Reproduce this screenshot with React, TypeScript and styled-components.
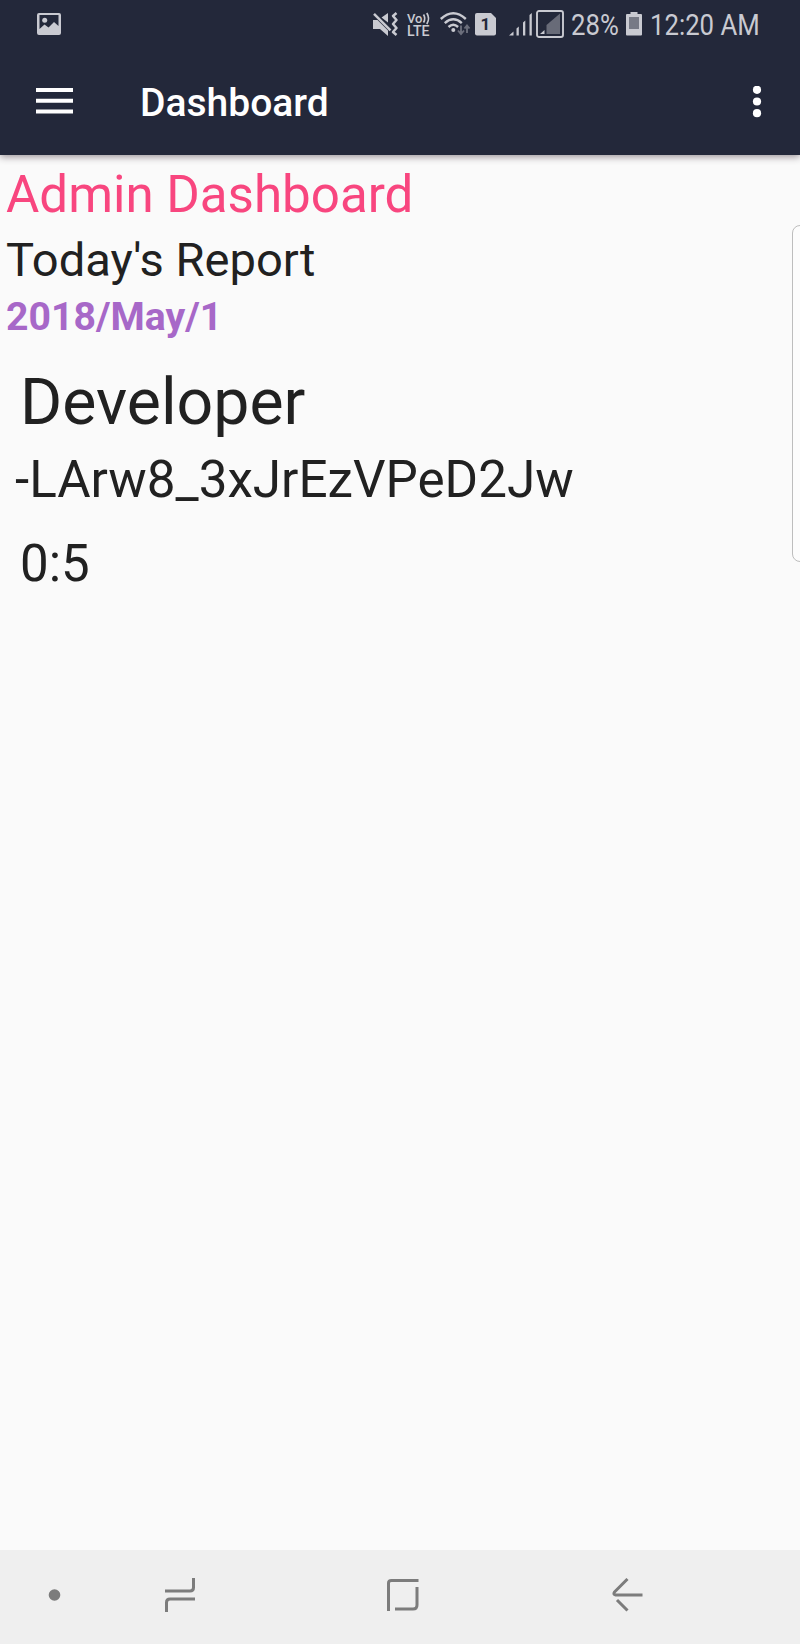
import React from "react";
import styled, { createGlobalStyle } from "styled-components";

const GlobalStyle = createGlobalStyle`
  * { box-sizing: border-box; }
  body { margin: 0; background: #fafafa; font-family: Roboto, "Liberation Sans", sans-serif; }
  svg { display: block; flex: none; }
`;

const Screen = styled.div`
  position: relative;
  display: flex;
  flex-direction: column;
  width: 800px;
  height: 1644px;
  overflow: hidden;
  background: #fafafa;
`;

const Header = styled.header`
  flex: none;
  height: 155px;
  background: #23283a;
  box-shadow: 0 2px 7px rgba(40, 25, 35, 0.45);
`;

const StatusBar = styled.div`
  display: flex;
  align-items: center;
  height: 48px;
  padding: 0 41px 0 37px;
  color: #c9cad1;
`;

const StatusIcons = styled.div`
  display: flex;
  align-items: center;
  margin-left: auto;
`;

const StatusIcon = styled.svg<{ $gap: number }>`
  margin-right: ${(p) => p.$gap}px;
  overflow: visible;
`;

const StatusText = styled.div<{ $width: number; $gap: number }>`
  width: ${(p) => p.$width}px;
  margin-right: ${(p) => p.$gap}px;
  font-size: 29.5px;
  line-height: 48px;
  white-space: nowrap;

  span {
    display: inline-block;
    transform: translateY(1px) scaleX(0.872);
    transform-origin: 0 50%;
  }
`;

const AppBar = styled.div`
  display: flex;
  align-items: center;
  height: 107px;
  padding: 0 38px 0 36px;
`;

const IconButton = styled.button`
  padding: 0;
  border: 0;
  background: none;
  color: #fff;
`;

const Title = styled.h1`
  flex: 1;
  margin: 2px 0 0 67px;
  color: #fff;
  font-size: 39px;
  line-height: 48px;
  font-weight: 500;
`;

const Content = styled.main`
  flex: 1;
  padding: 10px 6px 0;
`;

const Line = styled.div<{
  $size: number;
  $height: number;
  $top?: number;
  $left?: number;
  $color?: string;
  $bold?: boolean;
}>`
  margin-top: ${(p) => p.$top ?? 0}px;
  margin-left: ${(p) => p.$left ?? 0}px;
  font-size: ${(p) => p.$size}px;
  line-height: ${(p) => p.$height}px;
  color: ${(p) => p.$color ?? "#212121"};
  font-weight: ${(p) => (p.$bold ? 700 : 400)};
  white-space: nowrap;
`;

const EdgeHandle = styled.div`
  position: absolute;
  top: 225px;
  right: -8px;
  width: 16px;
  height: 337px;
  border: 1px solid #bdbdbd;
  border-radius: 8px;
  background: #fcfcfc;
`;

const NavBar = styled.nav`
  flex: none;
  display: flex;
  align-items: center;
  height: 94px;
  padding: 0 157px 4px 48px;
  background: #efefef;
`;

const NavIcon = styled.svg<{ $gap?: number }>`
  margin-left: ${(p) => p.$gap ?? 0}px;
  fill: none;
  stroke: #7c7c7c;
  stroke-width: 3;
`;

export default function App() {
  return (
    <Screen>
      <GlobalStyle />
      <Header>
        <StatusBar>
          <svg width="24" height="22" viewBox="0 0 24 22">
            <path
              fill="#c9cad1"
              fillRule="evenodd"
              d="M2 0h20a2 2 0 0 1 2 2v18a2 2 0 0 1-2 2H2a2 2 0 0 1-2-2V2a2 2 0 0 1 2-2zM2.500 2v14l5-4.500 4 3 5.500-5.500 4.500 4V2z"
            />
            <circle cx="7.700" cy="7.300" r="2.500" fill="#c9cad1" />
          </svg>
          <StatusIcons>
            <StatusIcon $gap={9} width="26" height="24" viewBox="0 0 26 24">
              <path fill="#c9cad1" d="M1 8h4.500L16 18.500V24L8 17H1zM16 1v9.500L9.500 5.500z" />
              <path stroke="#23283a" strokeWidth="1.500" d="M4 1.500l15 15" />
              <path stroke="#c9cad1" strokeWidth="2.400" d="M2 1.800l16.500 16.500" />
              <path
                fill="none"
                stroke="#c9cad1"
                strokeWidth="2.500"
                strokeLinejoin="round"
                d="M24.500 1l-3.500 3 3.500 4-3.500 4 3.500 4-3.500 4 3.500 3"
              />
            </StatusIcon>
            <StatusIcon $gap={10} width="23" height="24" viewBox="0 0 23 24">
              <text x="0" y="10.500" fontSize="13" fontWeight="500" fill="#c9cad1" textLength="15.500" lengthAdjust="spacingAndGlyphs">Vo</text>
              <path fill="none" stroke="#c9cad1" strokeWidth="1.700" d="M16.500 2.500q2.500 4 0 8M19.800 1q3.500 5.500 0 11" />
              <text x="0" y="23.500" fontSize="14.500" fontWeight="500" fill="#c9cad1" textLength="22.500" lengthAdjust="spacingAndGlyphs">LTE</text>
            </StatusIcon>
            <StatusIcon $gap={5} width="30" height="24" viewBox="0 0 30 24">
              <g fill="none" stroke="#c9cad1" strokeWidth="2.400">
                <path d="M.8 7Q13.300-4.500 25.800 7M4.800 11.200Q13.300 3.500 21.800 11.200M8.500 15Q13.300 10.500 18.100 15" />
              </g>
              <circle cx="13.300" cy="18" r="2" fill="#c9cad1" />
              <path fill="none" stroke="#6b6e7b" strokeWidth="1.900" d="M21 13.500v8M18 18.500l3 3.500 3-3.500M27 21v-7M24.500 16.500L27 13.500l2.500 3" />
            </StatusIcon>
            <StatusIcon $gap={13} width="21" height="24" viewBox="0 0 21 24">
              <path fill="#c9cad1" d="M2 1h14l5 5v15.500a2 2 0 0 1-2 2H2a2 2 0 0 1-2-2V3a2 2 0 0 1 2-2z" />
              <text x="10.300" y="18.300" fontSize="17" fontWeight="700" fill="#23283a" textAnchor="middle">1</text>
            </StatusIcon>
            <StatusIcon $gap={4} width="23" height="24" viewBox="0 0 23 24" fill="#c9cad1">
              <path d="M0 23.500L4.500 19.500v4zM7.500 16.500l2.300-2v9H7.500zM14 10.500l2.300-2v15H14zM20.500 3l2.300-2v22.500h-2.300z" />
            </StatusIcon>
            <StatusIcon $gap={7} width="28" height="28" viewBox="0 0 28 28">
              <rect x="1" y="1" width="26" height="26" rx="2" fill="none" stroke="#c9cad1" strokeWidth="1.900" />
              <path fill="#686b78" d="M10.500 15L24 3.500V24H10.500z" />
              <path fill="#c9cad1" d="M4 24l4.500-4v4z" />
            </StatusIcon>
            <StatusText $width={46} $gap={9}>
              <span>28%</span>
            </StatusText>
            <StatusIcon $gap={8} width="16" height="24" viewBox="0 0 16 24">
              <path fill="#c9cad1" d="M4.500 0h7v2H15q1 0 1 1v19.500q0 1-1 1H1q-1 0-1-1V3q0-1 1-1h3.500z" />
              <path fill="#777a86" d="M3 5h10v12H3z" />
            </StatusIcon>
            <StatusText $width={109} $gap={0}>
              <span>12:20 AM</span>
            </StatusText>
          </StatusIcons>
        </StatusBar>
        <AppBar>
          <IconButton aria-label="Open menu">
            <svg width="37" height="27" viewBox="0 0 37 27" fill="currentColor">
              <path d="M0 0h37v4H0zM0 10.800h37v4H0zM0 21.500h37v4H0z" />
            </svg>
          </IconButton>
          <Title>Dashboard</Title>
          <IconButton aria-label="More options">
            <svg width="10" height="32" viewBox="0 0 10 32" fill="currentColor">
              <circle cx="5" cy="3.800" r="4.100" />
              <circle cx="5" cy="15.500" r="4.100" />
              <circle cx="5" cy="27.200" r="4.100" />
            </svg>
          </IconButton>
        </AppBar>
      </Header>
      <Content>
        <Line $size={51.1} $height={60} $color="#f8467f">Admin Dashboard</Line>
        <Line $size={47.1} $height={56} $top={7}>Today's Report</Line>
        <Line $size={39.2} $height={46} $top={6} $color="#a768c8" $bold>2018/May/1</Line>
        <Line $size={64.4} $height={76} $top={24} $left={14}>Developer</Line>
        <Line $size={51.2} $height={60} $top={10} $left={9}>-LArw8_3xJrEzVPeD2Jw</Line>
        <Line $size={51} $height={60} $top={24} $left={14}>0:5</Line>
      </Content>
      <EdgeHandle />
      <NavBar>
        <NavIcon width="13" height="34" viewBox="0 0 13 34">
          <circle cx="6.500" cy="17" r="5.800" fill="#7c7c7c" stroke="none" />
        </NavIcon>
        <NavIcon $gap={104} width="30" height="34" viewBox="0 0 30 34">
          <path d="M0 13H25Q28.500 13 28.500 9.500V0M30 21H5Q1.500 21 1.500 24.500V34" />
        </NavIcon>
        <NavIcon $gap={192} width="32" height="34" viewBox="0 0 32 34">
          <path d="M1.500 33V5Q1.500 2.500 4.500 2.500H31.500M8 31H26Q30 31 30 27V9" />
        </NavIcon>
        <NavIcon $gap={193} width="31" height="34" viewBox="0 0 31 34" strokeLinejoin="round">
          <path d="M15.500 1L2.500 14Q1 16.800 3.500 17H30.500M5 22L15.500 32.500" />
        </NavIcon>
      </NavBar>
    </Screen>
  );
}
